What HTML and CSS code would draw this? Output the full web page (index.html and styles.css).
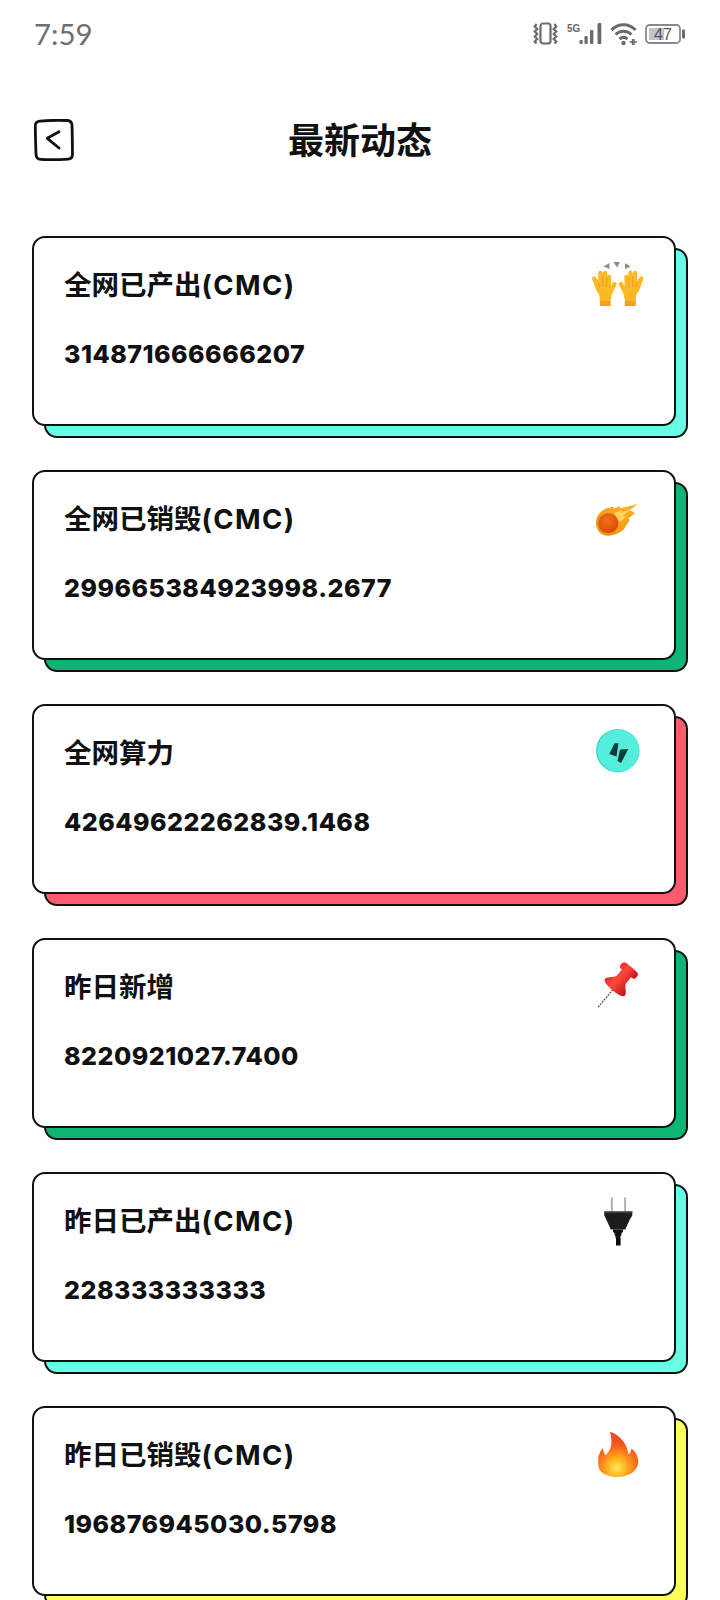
FILE: index.html
```html
<!DOCTYPE html>
<html lang="zh-CN">
<head>
  <meta charset="UTF-8">
  <meta name="viewport" content="width=device-width, initial-scale=1.0">
  <title>最新动态</title>
  <link rel="stylesheet" href="styles.css">
</head>
<body>
  <div class="status-bar">
    <span class="status-time">7:59</span>
    <div class="status-icons">
      <!-- vibrate -->
      <svg width="25" height="24" viewBox="0 0 25 24" fill="none" stroke="#6b6b6b">
        <rect x="7.500" y="1.500" width="10" height="20" rx="2.500" stroke-width="2.200"/>
        <path d="M3.500 2l-1.800 2.500 2.600 2.500-2.600 2.500 2.600 2.500-2.600 2.500 2.600 2.500-2.600 2.500 1.800 2" stroke-width="2.200"/>
        <path d="M21.500 2l1.800 2.500-2.600 2.500 2.600 2.500-2.600 2.500 2.600 2.500-2.600 2.500 2.600 2.500-1.800 2" stroke-width="2.200"/>
      </svg>
      <!-- 5G signal -->
      <svg class="icon-signal" width="35" height="24" viewBox="0 0 35 24" fill="#6b6b6b">
        <text class="net-label" x="0" y="9.500">5G</text>
        <rect x="12.500" y="18" width="3.200" height="4" rx="1"/>
        <rect x="17.500" y="14" width="3.200" height="8" rx="1"/>
        <rect x="23" y="8" width="3.400" height="14" rx="1"/>
        <rect x="30.500" y="1" width="3.800" height="21" rx="1"/>
      </svg>
      <!-- wifi -->
      <svg width="27" height="24" viewBox="0 0 27 24" fill="none" stroke="#6b6b6b" stroke-width="3">
        <path d="M1.500 8C8 1 19 1 25.500 8"/>
        <path d="M5.500 12.500C10 8 17 8 21.500 12.500"/>
        <path d="M9.500 17C12 15 15 15 17.500 17"/>
        <circle cx="13.500" cy="21" r="2.200" fill="#6b6b6b" stroke="none"/>
        <path d="M19.500 20h2.500M24.500 20h2.500M22.500 17v6M24 17v6" stroke-width="1.400"/>
      </svg>
      <!-- battery -->
      <svg width="40" height="20" viewBox="0 0 40 20" fill="none">
        <rect x="1" y="1" width="34" height="18" rx="3.500" stroke="#8a8a8a" stroke-width="1.800"/>
        <rect x="4" y="4" width="15" height="12" fill="#c4c4c4"/>
        <rect x="37" y="5.500" width="3" height="9" rx="1" fill="#6b6b6b"/>
        <text class="battery-label" x="18" y="16" text-anchor="middle">47</text>
      </svg>
    </div>
  </div>

  <header class="page-head">
    <a class="back-link" href="#">
      <svg width="40" height="42" viewBox="0 0 40 42" fill="none" stroke="#111" stroke-linecap="round" stroke-linejoin="round">
        <path d="M6 2.200C14 1.400 26 1.200 33.500 1.500 36.500 1.700 37.800 3.500 38 6 38.300 15 38.400 26 38.500 35 38.500 38.500 37 40 34 40.200 25 40.800 14 40.800 6.500 40.400 3.500 40.200 2.200 38.500 2 35.500 1.700 26 1.300 15 1.300 6.500 1.400 3.800 3 2.500 6 2.200Z" stroke-width="2.800"/>
        <path d="M25 12.700L13.300 19.300 25 29" stroke-width="2.800"/>
      </svg>
    </a>
    <h1 class="page-title">最新动态</h1>
  </header>

  <main class="card-list">
    <section class="card card-cyan">
      <div class="card-head">
        <h2 class="card-title">全网已产出<span class="unit">(CMC)</span></h2>
        <svg class="card-icon" viewBox="0 0 56 56">
          <path d="M19.500 6l-6 3.500 6 2.500zM23.500 5H30l-3 5.500zM35 6l5.500 3.500L35 12z" fill="#8c8c8c"/>
          <g id="raised-hand">
            <path d="M10 49l-.5-10-2-6 13.500-1 .5 8-1 3 .5 6z" fill="#fbb623"/>
            <path d="M9 34L4.200 21.500M11 32L10.300 16M15 32V16M18.500 33L19 20M19.500 37L24.500 27" stroke="#fcba2a" stroke-width="4.400" stroke-linecap="round" fill="none"/>
            <path d="M10 49l.2-5h10l.3 5z" fill="#f2a014"/>
            <path d="M6.800 22L10 30M12.700 19L13 30M17 21L16.500 30" stroke="#e9950f" stroke-width=".8" fill="none"/>
          </g>
          <use href="#raised-hand" transform="translate(55.500 0) scale(-1 1)"/>
        </svg>
      </div>
      <p class="card-value">314871666666207</p>
    </section>

    <section class="card card-green">
      <div class="card-head">
        <h2 class="card-title">全网已销毁<span class="unit">(CMC)</span></h2>
        <svg class="card-icon" viewBox="0 0 56 56">
          <defs>
            <linearGradient id="comet-tail" x1="0" y1="1" x2="1" y2="0">
              <stop offset="0" stop-color="#f68a0c"/>
              <stop offset="1" stop-color="#ffb52a"/>
            </linearGradient>
            <radialGradient id="comet-ball" cx="0.450" cy="0.350" r="0.700">
              <stop offset="0" stop-color="#f4701a"/>
              <stop offset="1" stop-color="#d2470a"/>
            </radialGradient>
          </defs>
          <path d="M6 32C6 25 11 19.500 16.700 17.300L24 15.500 23 18 30 15 29.500 17.500 47.700 13 40 19 45 22.300 38.500 27.500 40 29 33.300 39C28 43 23 44.700 18.300 44.700 11 44.700 6 39 6 32z" fill="url(#comet-tail)"/>
          <path d="M24 22L33 19 31 22 41 17.500 33 25 36 26 30 31z" fill="#ffd65e"/>
          <circle cx="18.300" cy="32.300" r="10" fill="url(#comet-ball)"/>
        </svg>
      </div>
      <p class="card-value">299665384923998.2677</p>
    </section>

    <section class="card card-red">
      <div class="card-head">
        <h2 class="card-title">全网算力</h2>
        <svg class="card-icon" viewBox="0 0 56 56">
          <circle cx="27.700" cy="25.700" r="21.700" fill="#3fd6ca"/>
          <circle cx="28.400" cy="25.700" r="21" fill="#55eedd"/>
          <path d="M24.500 18.300L28.500 18.300 26.500 31.500 19.300 29z" fill="#0c3b3c"/>
          <path d="M30 24.500L38.300 24 31 38 27.500 36z" fill="#0c3b3c"/>
        </svg>
      </div>
      <p class="card-value">42649622262839.1468</p>
    </section>

    <section class="card card-green">
      <div class="card-head">
        <h2 class="card-title">昨日新增</h2>
        <svg class="card-icon" viewBox="0 0 56 56">
          <defs>
            <linearGradient id="pin-red" x1="0" y1="0" x2="1" y2="0">
              <stop offset="0" stop-color="#e82a22"/>
              <stop offset="0.350" stop-color="#ff4a3a"/>
              <stop offset="1" stop-color="#c4121a"/>
            </linearGradient>
          </defs>
          <g transform="translate(25.500 27.500) rotate(40)">
            <path d="M0 4V28" stroke="#666" stroke-width="1.400" stroke-dasharray="2 1"/>
            <path d="M-13 1C-13-3-7-5-6-9L-6-19H6V-9C7-5 13-3 13 1 13 6-13 6-13 1Z" fill="url(#pin-red)"/>
            <rect x="-10" y="-25" width="20" height="8" rx="3.600" fill="url(#pin-red)"/>
          </g>
        </svg>
      </div>
      <p class="card-value">8220921027.7400</p>
    </section>

    <section class="card card-cyan">
      <div class="card-head">
        <h2 class="card-title">昨日已产出<span class="unit">(CMC)</span></h2>
        <svg class="card-icon" viewBox="0 0 56 56">
          <rect x="20.800" y="4.500" width="2" height="14" fill="#b5afa5"/>
          <rect x="34.100" y="4.500" width="2" height="14" fill="#b5afa5"/>
          <path d="M14.300 18.500h28v4l-2.500 4-4.500 10h-14.500l-4.500-10-2-4z" fill="#1d1d1d"/>
          <path d="M14.300 18.500h28v1.500h-28z" fill="#3e3e3e"/>
          <path d="M23 36.500h10v2.500l-1.500 1v2l-1 1v2h-5v-2l-1-1v-2l-1.500-1z" fill="#111"/>
          <rect x="26" y="45" width="4.600" height="7.500" fill="#0c0c0c"/>
        </svg>
      </div>
      <p class="card-value">228333333333</p>
    </section>

    <section class="card card-yellow">
      <div class="card-head">
        <h2 class="card-title">昨日已销毁<span class="unit">(CMC)</span></h2>
        <svg class="card-icon" viewBox="0 0 56 56">
          <defs>
            <radialGradient id="flame" gradientUnits="userSpaceOnUse" cx="26.700" cy="41" r="27">
              <stop offset="0" stop-color="#ffe95e"/>
              <stop offset="0.350" stop-color="#ffb21e"/>
              <stop offset="0.750" stop-color="#fb6b1c"/>
              <stop offset="1" stop-color="#ee4f1e"/>
            </radialGradient>
          </defs>
          <path d="M20 4.700C24 6 29 8.500 33 14 37 19.500 38 24 38.500 27.500 40 26 41 24 41.500 21.500 45.500 24.500 48.500 30 48.300 35.500 48 38 47 41 45 43 42 47 35 50 27.500 50 20 50 13.500 47.500 10.500 44 8.500 41.500 7.800 37.500 8.300 31 9 27 10.500 23.500 12.800 21 13 24 14 26.500 16 28 19.500 24 21.500 20 21.500 14.500 21.500 11 20.800 7.500 20 4.700z" fill="url(#flame)"/>
        </svg>
      </div>
      <p class="card-value">196876945030.5798</p>
    </section>
  </main>
</body>
</html>
```

FILE: styles.css
```css
html, body {
  height: 100%;
  overflow: hidden;
}
body {
  margin: 0;
  padding: 0;
  background-color: #ffffff;
  color: #111111;
  font-family: Inter, "Noto Sans CJK SC", sans-serif;
}

/* Status bar */
.status-bar {
  display: flex;
  align-items: center;
  justify-content: space-between;
  height: 66px;
  margin-bottom: 2px;
  padding: 0 35px 0 34px;
}
.status-time {
  font-family: Lato, sans-serif;
  font-size: 29.5px;
  color: #6f6f6f;
}
.status-icons {
  display: flex;
  align-items: center;
  gap: 8px;
  margin-top: 2px;
}
.icon-signal {
  margin-left: 1px;
}
.net-label {
  font-family: "Liberation Sans", sans-serif;
  font-size: 10px;
  font-weight: 700;
}
.battery-label {
  font-family: "Liberation Sans", sans-serif;
  font-size: 16px;
  fill: #555555;
}

/* Page header */
.page-head {
  position: relative;
  box-sizing: border-box;
  display: flex;
  align-items: center;
  justify-content: center;
  height: 146px;
  padding-bottom: 6px;
}
.back-link {
  position: absolute;
  left: 34px;
  top: 51px;
  display: block;
  line-height: 0;
}
.page-title {
  margin: 0;
  font-family: "Noto Sans CJK SC", sans-serif;
  font-size: 36px;
  font-weight: 700;
}

/* Cards */
.card-list {
  display: flex;
  flex-direction: column;
  gap: 44.1px;
  margin: 22px 44px 0 32px;
}
.card {
  box-sizing: border-box;
  flex: none;
  height: 190px;
  padding: 19px 28px 0 30px;
  background-color: #ffffff;
  border: 2px solid #111111;
  border-radius: 13px;
}
/* Offset block behind each card, with its own dark outline */
.card-cyan {
  box-shadow: 12px 12px 0 -2px #66ffe6, 12px 12px 0 0 #111111;
}
.card-green {
  box-shadow: 12px 12px 0 -2px #0cb574, 12px 12px 0 0 #111111;
}
.card-red {
  box-shadow: 12px 12px 0 -2px #ff5a6e, 12px 12px 0 0 #111111;
}
.card-yellow {
  box-shadow: 12px 12px 0 -2px #faff5a, 12px 12px 0 0 #111111;
}
.card-head {
  display: flex;
  align-items: center;
  justify-content: space-between;
  height: 56px;
}
.card-title {
  margin: 0;
  font-size: 27.5px;
  font-weight: 700;
  line-height: 36px;
}
.unit {
  letter-spacing: 1.4px;
}
.card-icon {
  flex: none;
  width: 56px;
  height: 56px;
}
.card-value {
  margin: 23px 0 0;
  font-size: 25px;
  font-weight: 800;
  line-height: 36px;
  letter-spacing: 0.5px;
}
```
